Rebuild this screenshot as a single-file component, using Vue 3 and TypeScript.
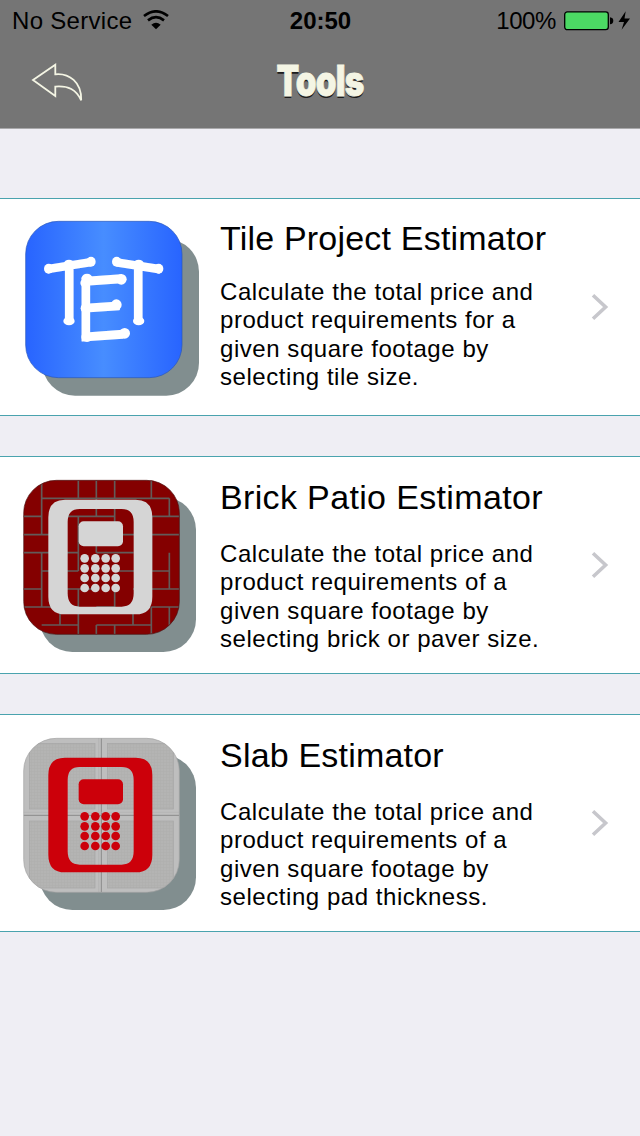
<template>
    <main class="screen">
        <header class="header">
            <div class="statusBar">
                <div class="carrier">
                    <span>No Service</span>
                    <svg class="wifi" width="26" height="20" viewBox="0 0 78 60">
                        <path d="M3 18 Q39 -10 75 18" fill="none" stroke="#000" stroke-width="8" />
                        <path d="M15 31 Q39 12 63 31" fill="none" stroke="#000" stroke-width="8" />
                        <path d="M25 44 Q39 32 53 44 L39 58 Z" />
                    </svg>
                </div>
                <strong class="clock">20:50</strong>
                <div class="power">
                    <span class="percent">100%</span>
                    <svg class="battery" width="68" height="20" viewBox="0 0 68 20">
                        <rect x="0.7" y="0.9" width="43.6" height="17.8" rx="2.6" fill="#4cd964" stroke="#000" stroke-width="1.3" />
                        <path d="M46 6.3 Q49.3 6.8 49.3 9.7 Q49.3 12.8 46 13.3 Z" />
                        <path d="M61.7 0.3 L54.5 11 H60 L57.6 18.8 L66 7.6 H60.5 Z" />
                    </svg>
                </div>
            </div>
            <div class="navBar">
                <button class="back" aria-label="Back">
                    <svg width="54" height="42" viewBox="0 0 54 42">
                        <path d="M3 20 L25.3 4.8 V14.3 C39 13 51.8 22 51.2 40.3 C46 29.5 38.5 25.6 25.3 26.6 V36 Z" fill="none" stroke="#f4f5e4" stroke-width="1.8" />
                    </svg>
                </button>
                <h1>Tools</h1>
            </div>
        </header>

        <ul class="tools">
            <li v-for="tool in tools" :key="tool.icon" :class="tool.icon">
                <!-- Tile estimator: blue badge with the three slanted letters -->
                <svg v-if="tool.icon === 'tile'" class="icon" viewBox="-30 27 600 648">
                    <defs>
                        <linearGradient id="blue">
                            <stop offset="0" stop-color="#2864ff" />
                            <stop offset="0.5" stop-color="#478dff" />
                            <stop offset="1" stop-color="#2864ff" />
                        </linearGradient>
                    </defs>
                    <rect x="97" y="147" width="470" height="470" rx="98" fill="#818e8f" />
                    <rect x="47" y="94" width="469" height="469" rx="98" fill="url(#blue)" stroke="#2856b8" stroke-width="2" />
                    <g class="letters">
                        <text transform="translate(178 396) skewY(-9) scale(0.86 1)" font-size="260" text-anchor="middle">T</text>
                        <text transform="translate(385 396) skewY(9) scale(0.86 1)" font-size="260" text-anchor="middle">T</text>
                        <text transform="translate(199 453) skewY(-4) scale(0.82 1)" font-size="273">E</text>
                    </g>
                    <g fill="#fff">
                        <ellipse v-for="(k, i) in knobs" :key="i" :cx="k[0]" :cy="k[1]" :rx="k[2]" :ry="k[3]" />
                    </g>
                </svg>

                <!-- Brick and slab share the same calculator, only the background changes -->
                <svg v-else class="icon" viewBox="-30 21 600 648">
                    <defs>
                        <clipPath :id="tool.icon + 'Clip'">
                            <rect x="41" y="91" width="467" height="462" rx="98" />
                        </clipPath>
                        <pattern id="grain" width="9" height="9" patternUnits="userSpaceOnUse">
                            <rect width="9" height="9" fill="#b4b4b3" />
                            <path d="M0 1 H9 M1 0 V9" stroke="#adadac" stroke-width="2" />
                        </pattern>
                    </defs>
                    <rect x="89" y="141" width="469" height="465" rx="98" fill="#818e8f" />
                    <g v-if="tool.icon === 'brick'" clip-path="url(#brickClip)">
                        <rect x="40" y="90" width="470" height="465" fill="#840000" />
                        <path :d="mortar" fill="none" stroke="#625b59" stroke-width="5" />
                    </g>
                    <g v-else clip-path="url(#slabClip)">
                        <rect x="40" y="90" width="470" height="465" fill="#bebebe" />
                        <g fill="url(#grain)" stroke="#a5a5a5" stroke-width="2">
                            <rect x="58" y="106" width="197" height="197" />
                            <rect x="292" y="106" width="198" height="197" />
                            <rect x="58" y="339" width="197" height="201" />
                            <rect x="292" y="339" width="198" height="201" />
                        </g>
                        <path d="M274 90 V553 M40 322 H508" stroke="#8b8b8b" stroke-width="3" />
                        <path d="M266 90 V553 M40 313 H508" stroke="#b0b0b0" stroke-width="2" />
                    </g>
                    <rect x="41" y="91" width="467" height="462" rx="98" fill="none" :stroke="tool.edge" stroke-width="2" />
                    <g :fill="tool.ink">
                        <path fill-rule="evenodd" d="M165 149 H377 Q427 149 427 202 V440 Q427 493 377 493 H165 Q115 493 115 440 V202 Q115 149 165 149 Z M209 177 Q173 177 173 216 V430 Q173 470 209 470 H335 Q371 470 371 430 V216 Q371 177 335 177 Z" />
                        <rect x="206" y="214" width="133" height="75" rx="15" />
                        <template v-for="y in keyRows" :key="y">
                            <circle v-for="x in keyColumns" :key="x" :cx="x" :cy="y" r="13" />
                        </template>
                    </g>
                </svg>

                <div class="details">
                    <h2>{{ tool.name }}</h2>
                    <p>{{ tool.description }}</p>
                </div>
                <svg class="chevron" width="18" height="30" viewBox="0 0 18 30">
                    <path d="M2 3.2 L14.6 15 L2 26.8" fill="none" stroke="#c7c7cc" stroke-width="3.6" />
                </svg>
            </li>
        </ul>
    </main>
</template>

<script lang="ts" setup>
    import { Ref, ref } from 'vue';

    // data of each row in the list
    interface Itool {
        icon: string,
        name: string,
        description: string,
        ink: string,
        edge: string
    }

    const tools:Ref<Array<Itool>> = ref([
        {
            icon: 'tile',
            name: 'Tile Project Estimator',
            description: 'Calculate the total price and product requirements for a given square footage by selecting tile size.',
            ink: '#fff',
            edge: '#2856b8'
        },
        {
            icon: 'brick',
            name: 'Brick Patio Estimator',
            description: 'Calculate the total price and product requirements of a given square footage by selecting brick or paver size.',
            ink: '#d5d5d5',
            edge: '#4a1010'
        },
        {
            icon: 'slab',
            name: 'Slab Estimator',
            description: 'Calculate the total price and product requirements of a given square footage by selecting pad thickness.',
            ink: '#cc000a',
            edge: '#a2a2a2'
        }
    ]);

    // round ends of the letters: cx, cy, rx, ry
    const knobs:Array<Array<number>> = [
        [116, 236, 14, 15], [243, 215, 14, 15], [177, 393, 17, 13], [177, 221, 15, 12],
        [320, 215, 14, 15], [446, 236, 14, 15], [386, 393, 17, 13], [386, 221, 15, 12],
        [231, 265, 16, 14], [226, 279, 15, 14], [334, 268, 16, 16], [227, 355, 15, 15],
        [319, 344, 16, 16], [231, 441, 17, 15], [344, 430, 16, 16]
    ];

    // position of the calculator keys
    const keyColumns:Array<number> = [224, 256, 287, 317];
    const keyRows:Array<number> = [325, 355, 384, 414];

    // the lines between the bricks
    const mortar:string = [
        'M95 145 H478 M40 199 H95 M173 199 H314 M424 199 H508',
        'M40 254 H150 M314 254 H508 M40 308 H205 M259 308 H371',
        'M95 363 H205 M314 363 H478 M40 417 H95 M150 417 H259 M369 417 H508',
        'M40 471 H205 M259 471 H314 M424 471 H508 M95 525 H205 M259 525 H424',
        'M95 90 V254 M95 308 V471 M205 90 V145 M205 199 V363',
        'M259 90 V199 M259 254 V308 M314 90 V145 M314 177 V254 M424 90 V145',
        'M424 199 V363 M478 145 V199 M478 308 V417 M150 471 V525 M205 417 V553',
        'M259 525 V553 M314 417 V471 M314 525 V553 M369 471 V525 M424 471 V553 M478 471 V525'
    ].join(' ');
</script>

<style>
    body {
        margin: 0;
        background-color: #efeef4;
    }
</style>

<style scoped>
    .screen {
        width: 640px;
        height: 1136px;
        overflow: hidden;
        background-color: #efeef4;
        color: #000;
        font-family: "Liberation Sans", Arial, sans-serif;
    }

    .header {
        height: 128px;
        background-color: #757575;
        border-bottom: 1px solid #a9a9ab;
    }

    .statusBar {
        display: grid;
        grid-template-columns: 1fr auto 1fr;
        height: 40px;
        padding: 0 8px 0 12px;
        font-size: 24px;
        line-height: 42px;
    }

    .carrier {
        display: flex;
        letter-spacing: 0.3px;
    }

    .wifi {
        margin: 10px 0 0 11px;
    }

    .clock {
        padding-right: 3px;
    }

    .power {
        display: flex;
        justify-content: flex-end;
    }

    .percent {
        letter-spacing: -0.4px;
    }

    .battery {
        margin: 11px 0 0 8px;
    }

    .navBar {
        display: grid;
        grid-template-columns: 1fr auto 1fr;
        height: 88px;
    }

    .back {
        width: 54px;
        height: 42px;
        margin: 20px 0 0 30px;
        padding: 0;
        border: none;
        background: none;
    }

    h1 {
        width: 120px;
        margin: 0;
        color: #f4f5e4;
        font-family: Inter, "Liberation Sans", sans-serif;
        font-size: 42px;
        font-weight: 900;
        line-height: 82px;
        letter-spacing: -1px;
        text-align: center;
        text-shadow: 0 2px 0 #1c1c1c;
        transform: scaleX(0.79);
        -webkit-text-stroke: 0.8px #f4f5e4;
    }

    .tools {
        display: flex;
        flex-direction: column;
        gap: 40px;
        margin: 69px 0 0;
        padding: 0;
        list-style: none;
    }

    .tools li {
        display: flex;
        height: 216px;
        border-top: 1px solid #4aa3ae;
        border-bottom: 1px solid #4aa3ae;
        background-color: #fff;
    }

    .icon {
        width: 200px;
        height: 216px;
    }

    .letters {
        fill: #fff;
        stroke: #fff;
        stroke-width: 6px;
        stroke-linejoin: round;
    }

    .details {
        width: 340px;
        padding: 20px 0 0 20px;
    }

    h2 {
        margin: 0 0 22.5px;
        font-size: 34px;
        font-weight: 400;
        line-height: 40px;
        letter-spacing: 0.2px;
    }

    .brick h2 {
        letter-spacing: 0.35px;
    }

    p {
        margin: 0;
        font-size: 24px;
        line-height: 28.5px;
        letter-spacing: 0.55px;
    }

    .tile .details {
        padding-top: 19px;
    }

    .tile h2 {
        margin-bottom: 19.5px;
    }

    .chevron {
        align-self: center;
        margin-left: 31px;
    }
</style>
